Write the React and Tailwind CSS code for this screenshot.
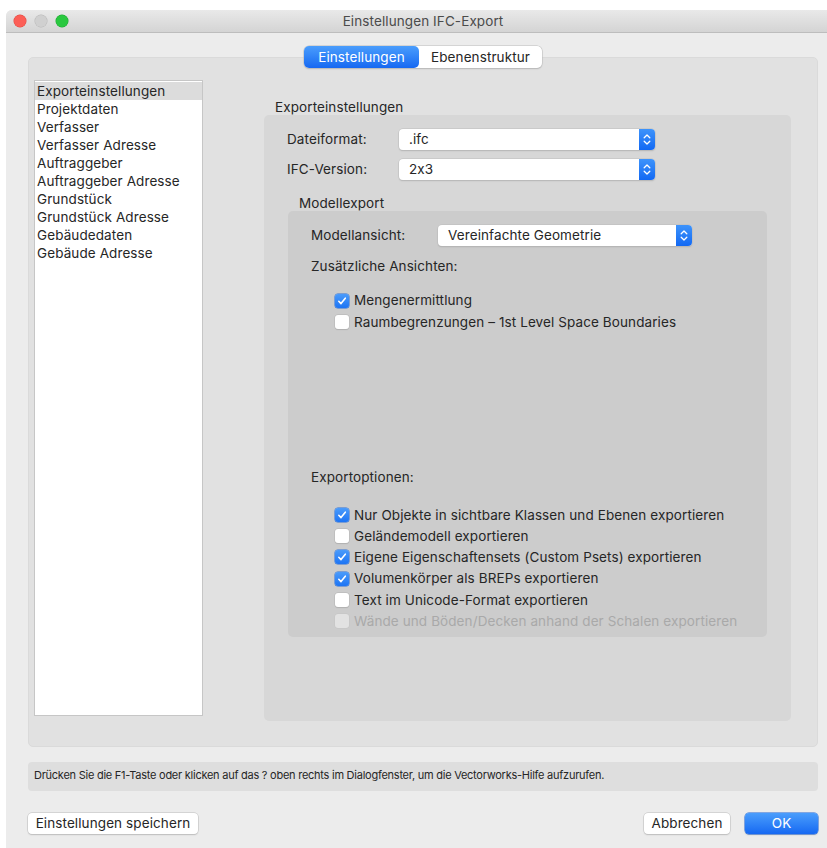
import React from "react";

const sections = [
  "Exporteinstellungen",
  "Projektdaten",
  "Verfasser",
  "Verfasser Adresse",
  "Auftraggeber",
  "Auftraggeber Adresse",
  "Grundstück",
  "Grundstück Adresse",
  "Gebäudedaten",
  "Gebäude Adresse",
];

const exportOptions = [
  { label: "Nur Objekte in sichtbare Klassen und Ebenen exportieren", checked: true },
  { label: "Geländemodell exportieren", checked: false },
  { label: "Eigene Eigenschaftensets (Custom Psets) exportieren", checked: true },
  { label: "Volumenkörper als BREPs exportieren", checked: true },
  { label: "Text im Unicode-Format exportieren", checked: false },
  { label: "Wände und Böden/Decken anhand der Schalen exportieren", checked: false, disabled: true },
];

const Checkbox = ({ checked, disabled }) => {
  if (checked) {
    return (
      <span className="flex items-center justify-center w-[14px] h-[14px] rounded-[3px] bg-gradient-to-b from-[#4a9bfb] to-[#1c74f4] shadow-[0_0_0_0.5px_#2a6fd8]">
        <svg width="10" height="10" viewBox="0 0 10 10" fill="none">
          <path d="M1.8 5.3 L4 7.6 L8.3 2.2" stroke="white" strokeWidth="1.6" strokeLinecap="round" strokeLinejoin="round" />
        </svg>
      </span>
    );
  }
  return (
    <span
      className={
        disabled
          ? "w-[14px] h-[14px] rounded-[3px] bg-[#e2e2e2] shadow-[0_0_0_0.5px_#c4c4c4]"
          : "w-[14px] h-[14px] rounded-[3px] bg-white shadow-[0_0_0_0.5px_#b5b5b5,0_0.5px_1px_rgba(0,0,0,0.15)]"
      }
    />
  );
};

const CheckRow = ({ label, checked, disabled }) => (
  <div className="flex items-center gap-[5px] h-[21.2px]">
    <Checkbox checked={checked} disabled={disabled} />
    <span className={disabled ? "text-[#a9a9a9]" : "text-[#262626]"}>{label}</span>
  </div>
);

// popup button with the blue up/down stepper on its right end
const Popup = ({ value, width }) => (
  <div
    className="flex h-[21px] rounded-[4px] bg-white shadow-[0_0_0_0.5px_#bdbdbd,0_1px_1.5px_rgba(0,0,0,0.18)]"
    style={{ width }}
  >
    <span className="flex-1 pl-[10px] leading-[21px] text-[#262626]">{value}</span>
    <span className="flex items-center justify-center w-[16px] rounded-r-[4px] bg-gradient-to-b from-[#3d93fb] to-[#1268f3]">
      <svg width="8" height="13" viewBox="0 0 8 13" fill="none">
        <path d="M1.2 4.8 L4 2 L6.8 4.8" stroke="white" strokeWidth="1.3" strokeLinecap="round" strokeLinejoin="round" />
        <path d="M1.2 8.2 L4 11 L6.8 8.2" stroke="white" strokeWidth="1.3" strokeLinecap="round" strokeLinejoin="round" />
      </svg>
    </span>
  </div>
);

const Button = ({ children, className = "" }) => (
  <button
    className={
      "h-[21px] px-[7px] rounded-[4px] bg-white text-[#262626] leading-[21px] shadow-[0_0_0_0.5px_#bdbdbd,0_1px_1.5px_rgba(0,0,0,0.18)] " +
      className
    }
  >
    {children}
  </button>
);

const App = () => {
  return (
    <div
      className="w-[827px] h-[848px] bg-white pl-[6px] pt-[10px] overflow-hidden text-[13.5px] tracking-[0.1px] [font-feature-settings:'calt'_0]"
      style={{ fontFamily: "Inter, 'Liberation Sans', sans-serif" }}
    >
      <div className="flex flex-col w-[834px] h-full bg-[#ececec] rounded-tl-[6px] overflow-hidden">
        {/* title bar */}
        <div className="relative flex items-center h-[23px] bg-gradient-to-b from-[#e9e9e9] to-[#d4d4d4] border-b border-[#bdbdbd]">
          <div className="flex items-center gap-[9px] pl-[8px]">
            <span className="w-[12px] h-[12px] rounded-full bg-[#fc5f57] shadow-[0_0_0_0.5px_#de4a41]" />
            <span className="w-[12px] h-[12px] rounded-full bg-[#d0d0d0] shadow-[0_0_0_0.5px_#b8b8b8]" />
            <span className="w-[12px] h-[12px] rounded-full bg-[#2ac840] shadow-[0_0_0_0.5px_#1ea532]" />
          </div>
          <div className="absolute inset-0 flex items-center justify-center text-[#4b4b4b]">
            Einstellungen IFC-Export
          </div>
        </div>

        <div className="flex flex-col px-[22px]">
          {/* tab switcher */}
          <div className="relative z-10 flex justify-center mt-[13px]">
            <div className="flex h-[22px] rounded-[5px] bg-white shadow-[0_0_0_0.5px_#bdbdbd,0_1px_1.5px_rgba(0,0,0,0.2)]">
              <span className="w-[115px] text-center leading-[22px] rounded-[5px] text-white bg-gradient-to-b from-[#4a9dfc] to-[#1668f2]">
                Einstellungen
              </span>
              <span className="w-[123px] text-center leading-[22px] text-[#262626]">Ebenenstruktur</span>
            </div>
          </div>

          {/* main group */}
          <div className="-mt-[11px] h-[690px] rounded-[5px] bg-[#e1e1e1] border border-[#dadada] pl-[5px] pt-[22px] flex gap-[61px]">
            <div className="w-[169px] h-[636px] bg-white border border-[#c6c6c6] text-[#262626] pt-[1px]">
              {sections.map((s, i) => (
                <div key={s} className={"h-[18px] leading-[18px] pl-[2px] " + (i === 0 ? "bg-[#dcdcdc]" : "")}>
                  {s}
                </div>
              ))}
            </div>

            <div className="flex flex-col w-[527px] pt-[19px]">
              <div className="pl-[11px] h-[16px] leading-[16px] text-[#262626]">Exporteinstellungen</div>
              <div className="h-[606px] rounded-[5px] bg-[#d7d7d7] px-[23px] pt-[14px]">
                <div className="flex items-center">
                  <span className="w-[112px] text-[#262626]">Dateiformat:</span>
                  <Popup value=".ifc" width={256} />
                </div>
                <div className="flex items-center mt-[9px]">
                  <span className="w-[112px] text-[#262626]">IFC-Version:</span>
                  <Popup value="2x3" width={256} />
                </div>

                <div className="pl-[12px] mt-[16px] h-[15px] leading-[15px] text-[#262626]">Modellexport</div>
                <div className="ml-px w-[479px] h-[426px] rounded-[5px] bg-[#cccccc] px-[23px] pt-[14px]">
                  <div className="flex items-center">
                    <span className="w-[127px] text-[#262626]">Modellansicht:</span>
                    <Popup value="Vereinfachte Geometrie" width={254} />
                  </div>
                  <div className="mt-[12px] h-[16px] leading-[16px] text-[#262626]">Zusätzliche Ansichten:</div>
                  <div className="pl-[24px] mt-[16px]">
                    <CheckRow label="Mengenermittlung" checked />
                    <CheckRow label="Raumbegrenzungen – 1st Level Space Boundaries" />
                  </div>

                  <div className="mt-[137px] h-[16px] leading-[16px] text-[#262626]">Exportoptionen:</div>
                  <div className="pl-[24px] mt-[19px] flex flex-col">
                    {exportOptions.map((o) => (
                      <CheckRow key={o.label} {...o} />
                    ))}
                  </div>
                </div>
              </div>
            </div>
          </div>

          {/* help hint */}
          <div className="mt-[15px] h-[29px] rounded-[4px] bg-[#dedede] pl-[6px] pt-[5px] text-[11px] text-[#262626] tracking-[-0.25px]">
            Drücken Sie die F1-Taste oder klicken auf das ? oben rechts im Dialogfenster, um die Vectorworks-Hilfe aufzurufen.
          </div>

          {/* dialog buttons */}
          <div className="flex items-center mt-[22px]">
            <Button className="w-[170px]">Einstellungen speichern</Button>
            <div className="flex-1" />
            <Button className="w-[86px]">Abbrechen</Button>
            <button className="ml-[15px] w-[73px] h-[21px] rounded-[4px] text-white leading-[21px] bg-gradient-to-b from-[#4a9dfc] to-[#1668f2] shadow-[0_0_0_0.5px_#1a62d8,0_1px_1.5px_rgba(0,0,0,0.2)]">
              OK
            </button>
          </div>
        </div>
      </div>
    </div>
  );
};

export default App;
